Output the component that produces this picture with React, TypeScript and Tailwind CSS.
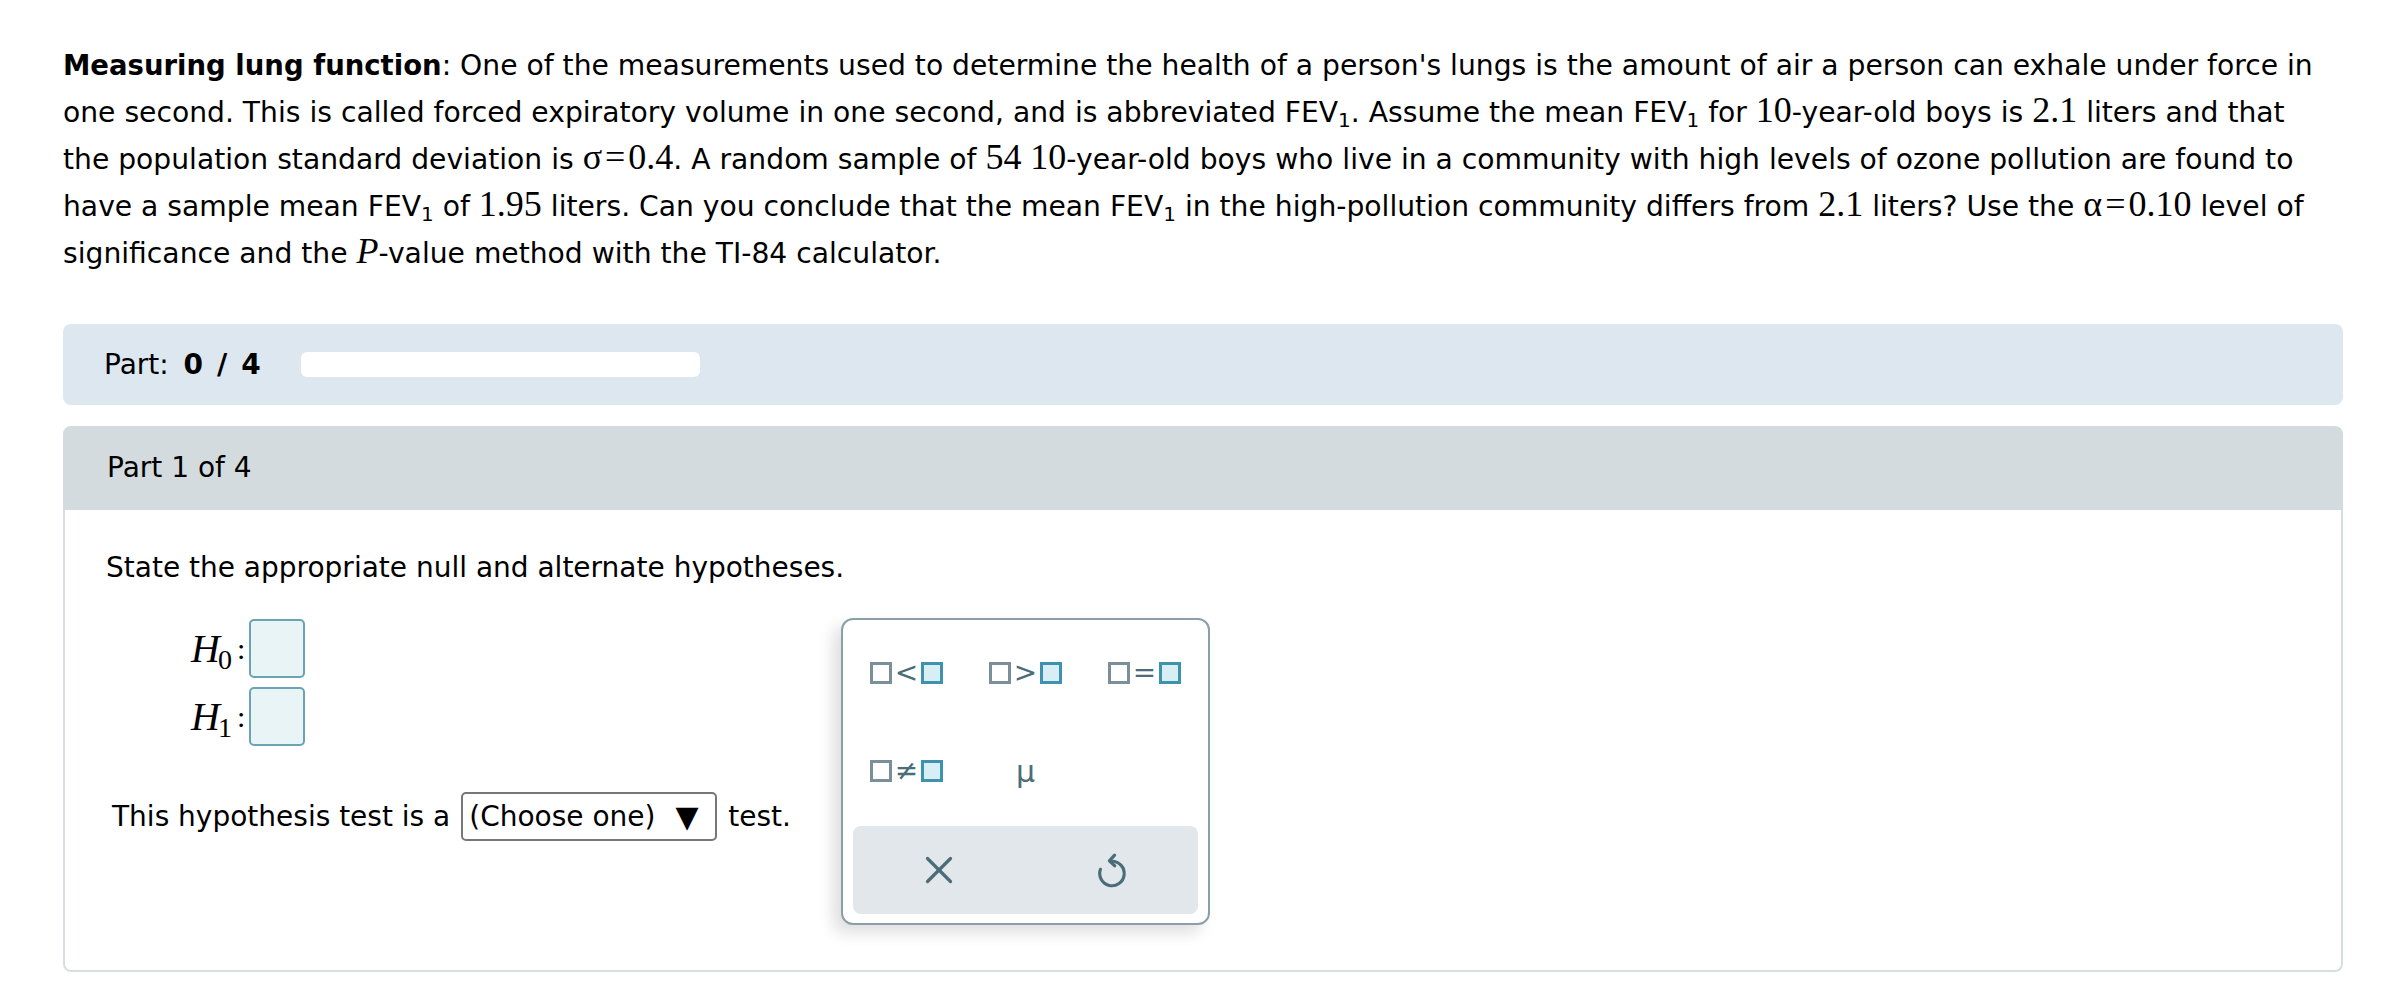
import { X } from "lucide-react";

function M({ children }: { children: React.ReactNode }) {
  return <span className="font-['Liberation_Serif',serif] text-[36px] leading-none">{children}</span>;
}

function Eq({ l, r }: { l: string; r: string }) {
  return (
    <M>
      {l}
      <span className="mx-[3px]">=</span>
      {r}
    </M>
  );
}

function Sub({ children }: { children: React.ReactNode }) {
  return <sub className="text-[20px] leading-none">{children}</sub>;
}

function Sq({ teal }: { teal?: boolean }) {
  return (
    <span
      className={
        teal
          ? "inline-block h-[22px] w-[22px] border-[3px] border-[#3d93ad] bg-[#d6eef4]"
          : "inline-block h-[22px] w-[22px] border-[3px] border-[#7b8f98] bg-white"
      }
    />
  );
}

function Op({ sign }: { sign: string }) {
  return (
    <div className="flex h-[50px] items-center justify-center">
      <Sq />
      <span className="mx-[3px] text-[28px] leading-none text-[#4b6c79]">{sign}</span>
      <Sq teal />
    </div>
  );
}

function HRow({ n }: { n: string }) {
  return (
    <div className="flex items-center">
      <span className="font-['Liberation_Serif',serif] text-[40px] leading-none">
        <i>H</i>
        <sub className="-ml-[2px] text-[28px] leading-none">{n}</sub>
      </span>
      <span className="ml-[5px] font-['Liberation_Serif',serif] text-[30px] leading-none">:</span>
      <span className="ml-[4px] h-[59px] w-[56px] rounded-[5px] border-2 border-[#6aa3b4] bg-[#e8f4f6]" />
    </div>
  );
}

export default function App() {
  return (
    <main className="min-h-screen bg-white px-[63px] pt-[42px] font-['DejaVu_Sans',sans-serif] text-[28px] text-black">
      <p className="pr-[24px] text-[28.2px] leading-[47px]">
        <b className="text-[27.5px]">Measuring lung function</b>: One of the measurements used to determine the health
        of a person's lungs is the amount of air a person can exhale under force in one second. This is called forced
        expiratory volume in one second, and is abbreviated FEV<Sub>1</Sub>. Assume the mean FEV<Sub>1</Sub> for{" "}
        <M>10</M>-year-old boys is <M>2.1</M> liters and that the population standard deviation is{" "}
        <Eq l="σ" r="0.4" />. A random sample of <M>54</M> <M>10</M>-year-old boys who live in a community with high
        levels of ozone pollution are found to have a sample mean FEV<Sub>1</Sub> of <M>1.95</M> liters. Can you
        conclude that the mean FEV<Sub>1</Sub> in the high-pollution community differs from <M>2.1</M> liters? Use the{" "}
        <Eq l="α" r="0.10" /> level of significance and the{" "}
        <M>
          <i>P</i>
        </M>
        -value method with the TI-84 calculator.
      </p>

      <div className="mt-[47px] flex h-[81px] items-center rounded-[8px] bg-[#dce7f0] pl-[41px]">
        <span>
          Part: <b className="ml-[6px]">0</b>
          <b className="mx-[14px]">/</b>
          <b>4</b>
        </span>
        <div className="ml-[40px] h-[25px] w-[399px] rounded-[6px] bg-white" />
      </div>

      <section className="mt-[21px]">
        <div className="flex h-[84px] items-center rounded-t-[8px] bg-[#d3dbde] px-[44px]">Part 1 of 4</div>
        <div className="relative h-[462px] rounded-b-[8px] border-x-2 border-b-2 border-[#d6dee2] pl-[41px] pt-[34px]">
          <p className="leading-[47px]">State the appropriate null and alternate hypotheses.</p>

          <div className="ml-[85px] mt-[28px] flex flex-col gap-[9px]">
            <HRow n="0" />
            <HRow n="1" />
          </div>

          <div className="ml-[6px] mt-[46px] flex items-center">
            <span>This hypothesis test is a</span>
            <div className="ml-[11px] flex h-[49px] w-[256px] items-center rounded-[5px] border-2 border-[#777] pl-[6px]">
              <span>(Choose one)</span>
              <span className="ml-[20px] text-[30px] leading-none">▼</span>
            </div>
            <span className="ml-[11px]">test.</span>
          </div>

          <div className="absolute left-[776px] top-[108px] flex h-[307px] w-[369px] flex-col rounded-[12px] border-2 border-[#8b9fa8] bg-white shadow-[-8px_8px_16px_rgba(0,0,0,0.13)]">
            <div className="grid grid-cols-3 gap-y-[48px] px-[4px] pt-[28px]">
              <Op sign="<" />
              <Op sign=">" />
              <Op sign="=" />
              <Op sign="≠" />
              <div className="flex h-[50px] items-center justify-center text-[30px] text-[#4b6c79]">μ</div>
            </div>
            <div className="mx-[10px] mb-[9px] mt-auto grid h-[88px] grid-cols-2 items-center rounded-[8px] bg-[#e1e7ea]">
              <div className="flex justify-center">
                <X size={46} strokeWidth={1.7} color="#4b6c79" />
              </div>
              <div className="flex justify-center">
                <svg width="42" height="42" viewBox="0 0 24 24" fill="none" stroke="#4b6c79" strokeWidth="1.8" strokeLinecap="round" strokeLinejoin="round">
                  <path d="M5.4 11.6 A7 7 0 1 0 12 7" />
                  <path d="M13.5 3.5 L10.5 6.8 L13.6 9.6" />
                </svg>
              </div>
            </div>
          </div>
        </div>
      </section>
    </main>
  );
}
